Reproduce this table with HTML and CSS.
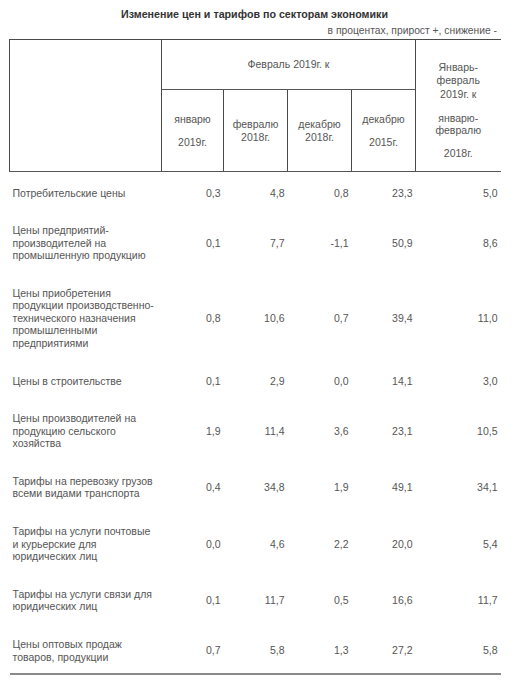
FILE: index.html
```html
<!DOCTYPE html>
<html lang="ru">
<head>
<meta charset="utf-8">
<title>Изменение цен и тарифов по секторам экономики</title>
<link rel="stylesheet" href="styles.css">
</head>
<body>
<div class="page">
  <div class="title">Изменение цен и тарифов по секторам экономики</div>
  <div class="unit">в процентах, прирост +, снижение -</div>
  <table class="prices">
    <colgroup>
      <col class="c-name">
      <col class="c-num">
      <col class="c-num2">
      <col class="c-num2">
      <col class="c-num2">
      <col class="c-last">
    </colgroup>
    <thead>
      <tr class="h1">
        <th class="blank" rowspan="2"></th>
        <th class="group" colspan="4">Февраль 2019г. к</th>
        <th class="period" rowspan="2">
          <div class="p1">Январь-<br>февраль</div>
          <div class="p2">2019г. к</div>
          <div class="p3">январю-<br>февралю</div>
          <div class="p4">2018г.</div>
        </th>
      </tr>
      <tr class="h2">
        <th class="sub"><div>январю</div><div class="gap">2019г.</div></th>
        <th class="sub">февралю<br>2018г.</th>
        <th class="sub">декабрю<br>2018г.</th>
        <th class="sub"><div>декабрю</div><div class="gap">2015г.</div></th>
      </tr>
    </thead>
    <tbody>
      <tr class="first">
        <td class="name">Потребительские цены</td>
        <td>0,3</td><td>4,8</td><td>0,8</td><td>23,3</td><td>5,0</td>
      </tr>
      <tr>
        <td class="name">Цены предприятий-<br>производителей на<br>промышленную продукцию</td>
        <td>0,1</td><td>7,7</td><td>-1,1</td><td>50,9</td><td>8,6</td>
      </tr>
      <tr>
        <td class="name">Цены приобретения<br>продукции производственно-<br>технического назначения<br>промышленными<br>предприятиями</td>
        <td>0,8</td><td>10,6</td><td>0,7</td><td>39,4</td><td>11,0</td>
      </tr>
      <tr>
        <td class="name">Цены в строительстве</td>
        <td>0,1</td><td>2,9</td><td>0,0</td><td>14,1</td><td>3,0</td>
      </tr>
      <tr>
        <td class="name">Цены производителей на<br>продукцию сельского<br>хозяйства</td>
        <td>1,9</td><td>11,4</td><td>3,6</td><td>23,1</td><td>10,5</td>
      </tr>
      <tr>
        <td class="name">Тарифы на перевозку грузов<br>всеми видами транспорта</td>
        <td>0,4</td><td>34,8</td><td>1,9</td><td>49,1</td><td>34,1</td>
      </tr>
      <tr>
        <td class="name">Тарифы на услуги почтовые<br>и курьерские для<br>юридических лиц</td>
        <td>0,0</td><td>4,6</td><td>2,2</td><td>20,0</td><td>5,4</td>
      </tr>
      <tr>
        <td class="name">Тарифы на услуги связи для<br>юридических лиц</td>
        <td>0,1</td><td>11,7</td><td>0,5</td><td>16,6</td><td>11,7</td>
      </tr>
      <tr class="last">
        <td class="name">Цены оптовых продаж<br>товаров, продукции</td>
        <td>0,7</td><td>5,8</td><td>1,3</td><td>27,2</td><td>5,8</td>
      </tr>
    </tbody>
  </table>
</div>
</body>
</html>
```

FILE: styles.css
```css
html, body {
  margin: 0;
  padding: 0;
  background: #ffffff;
}

body {
  font-family: "Liberation Sans", Arial, sans-serif;
  font-size: 10.5px;
  color: #555555;
}

.page {
  width: 491px;
  padding: 8px 0 0 9px;
}

.title {
  text-align: center;
  font-weight: bold;
  font-size: 10.7px;
  color: #333333;
  line-height: 13px;
}

.unit {
  text-align: right;
  font-size: 10.3px;
  padding-right: 3px;
  line-height: 13px;
  margin-top: 3px;
  margin-bottom: 2px;
}

.prices {
  width: 491px;
  border-collapse: collapse;
  table-layout: fixed;
  line-height: 12.5px;
}

.c-name { width: 152px; }
.c-num { width: 62px; }
.c-num2 { width: 64px; }
.c-last { width: 85px; }

.prices th {
  font-weight: normal;
  text-align: center;
  vertical-align: middle;
  padding: 0 2px;
  border-top: 1px solid #4a4a4a;
  border-right: 1px solid #4a4a4a;
  border-bottom: 1px solid #555555;
}

.prices th.blank {
  border-left: 1px solid #4a4a4a;
}

.prices th.period {
  border-right: none;
  vertical-align: top;
  padding-top: 21px;
  line-height: 13px;
}

.p2 { margin-top: 1px; }
.p3 { margin-top: 12px; line-height: 11.5px; }
.p4 { margin-top: 11px; }

.h1 { height: 50px; }
.h2 { height: 82px; }

.sub .gap { margin-top: 10.5px; }

.prices td {
  text-align: right;
  vertical-align: middle;
  padding: 12.6px 3px;
}

.prices td.name {
  text-align: left;
  white-space: nowrap;
}

.prices tr.first td {
  padding-top: 14.5px;
}

.prices tr.last td {
  padding-bottom: 9.5px;
  border-bottom: 2px solid #8a8a8a;
}
```
